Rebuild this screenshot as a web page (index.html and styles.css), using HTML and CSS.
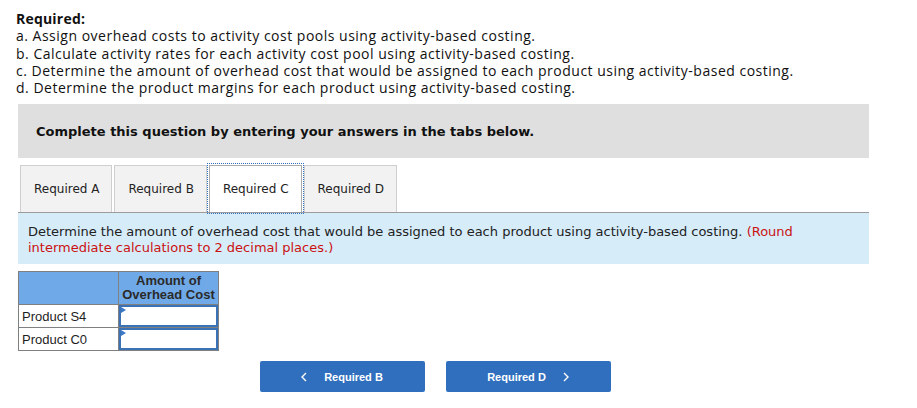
FILE: index.html
```html
<!DOCTYPE html>
<html lang="en">
<head>
  <meta charset="UTF-8" />
  <title>Required C</title>
  <link rel="stylesheet" href="styles.css">
</head>
<body>

<div class="required">
  <p class="req-title">Required:</p>
  <p>a. Assign overhead costs to activity cost pools using activity-based costing.</p>
  <p>b. Calculate activity rates for each activity cost pool using activity-based costing.</p>
  <p>c. Determine the amount of overhead cost that would be assigned to each product using activity-based costing.</p>
  <p>d. Determine the product margins for each product using activity-based costing.</p>
</div>

<div class="question">
  <div class="instructions">Complete this question by entering your answers in the tabs below.</div>

  <div class="tabs">
    <div class="tab">Required A</div>
    <div class="tab">Required B</div>
    <div class="tab active">Required C</div>
    <div class="tab">Required D</div>
  </div>

  <div class="prompt">
    Determine the amount of overhead cost that would be assigned to each product using activity-based costing.
    <span class="hint">(Round intermediate calculations to 2 decimal places.)</span>
  </div>

  <table class="answer">
    <tr>
      <th></th>
      <th>Amount of<br>Overhead Cost</th>
    </tr>
    <tr>
      <td class="label">Product S4</td>
      <td class="cell"><input type="text" /></td>
    </tr>
    <tr>
      <td class="label">Product C0</td>
      <td class="cell"><input type="text" /></td>
    </tr>
  </table>

  <div class="nav">
    <button class="nav-btn">
      <svg width="6" height="10" viewBox="0 0 6 10"><path d="M5 1 L1 5 L5 9" fill="none" stroke="#fff" stroke-width="1.4"/></svg>
      <span>Required B</span>
    </button>
    <button class="nav-btn">
      <span>Required D</span>
      <svg width="6" height="10" viewBox="0 0 6 10"><path d="M1 1 L5 5 L1 9" fill="none" stroke="#fff" stroke-width="1.4"/></svg>
    </button>
  </div>
</div>

</body>
</html>
```

FILE: styles.css
```css
* {
  margin: 0;
  padding: 0;
  box-sizing: border-box;
}
body {
  padding: 10px 16px 0 16px;
  font-family: 'Liberation Sans', Arial, sans-serif;
  color: #1e1e1e;
  background: #fff;
}
.required {
  font-family: 'Open Sans', 'Liberation Sans', sans-serif;
  font-size: 14px;
  line-height: 17.25px;
  letter-spacing: 0.5px;
  color: #111;
}
.req-title {
  font-weight: bold;
  letter-spacing: 0.2px;
}
.question {
  margin-left: 2px;
  width: 851px;
}
.instructions {
  margin-top: 8px;
  height: 54px;
  background: #dfdfdf;
  padding: 0 18px;
  display: flex;
  align-items: center;
  font-family: 'DejaVu Sans', Verdana, sans-serif;
  font-weight: bold;
  font-size: 13px;
  color: #111;
}
.tabs {
  display: flex;
  gap: 2px;
  margin-top: 7px;
  padding-left: 2px;
  border-bottom: 1px solid #9b9b9b;
}
.tab {
  height: 47px;
  padding: 0 12px 0 13px;
  display: flex;
  align-items: center;
  background: #f2f2f2;
  border: 1px solid #cfcfcf;
  border-bottom: none;
  font-family: 'DejaVu Sans', Verdana, sans-serif;
  font-size: 12px;
  color: #222;
}
.tab.active {
  background: #fff;
  border-color: #aaa;
  outline: 1px dotted #2f6fc6;
  outline-offset: 1px;
}
.prompt {
  background: #d6ecf9;
  padding: 11px 10px 9px 10px;
  height: 51px;
  font-family: 'DejaVu Sans', Verdana, sans-serif;
  font-size: 13px;
  line-height: 16px;
  color: #222;
}
.hint {
  color: #cc1111;
}
.answer {
  margin-top: 7px;
  border-collapse: collapse;
  border: 1px solid #808080;
  font-size: 13px;
}
.answer th {
  width: 100px;
  height: 33px;
  background: #70a9e7;
  border: 1px solid #808080;
  font-weight: bold;
  line-height: 14px;
  color: #2a2a2a;
}
.answer td {
  height: 23px;
  border: 1px solid #808080;
}
.answer td.label {
  padding-left: 3px;
}
.answer td.cell {
  position: relative;
  padding: 0;
}
.answer td.cell::before {
  content: '';
  position: absolute;
  left: 2px;
  top: 2px;
  border-left: 5px solid #3a78c8;
  border-top: 3px solid transparent;
  border-bottom: 3px solid transparent;
}
.answer input {
  display: block;
  width: 100%;
  height: 22px;
  border: 2px solid #3b72b6;
  outline: none;
}
.nav {
  display: flex;
  justify-content: center;
  gap: 21px;
  width: 834px;
  margin-top: 10px;
}
.nav-btn {
  width: 165px;
  height: 31px;
  background: #2f6fbe;
  border: none;
  border-radius: 2px;
  color: #fff;
  font-family: 'Liberation Sans', Arial, sans-serif;
  font-weight: bold;
  font-size: 11px;
  display: flex;
  align-items: center;
  justify-content: center;
  gap: 17px;
  cursor: pointer;
}
```
